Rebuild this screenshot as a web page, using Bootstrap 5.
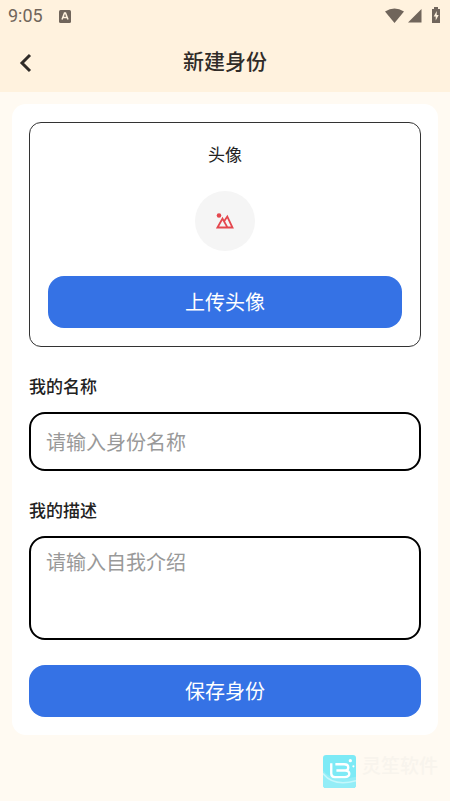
<!DOCTYPE html>
<html lang="zh-CN">
<head>
<meta charset="utf-8">
<meta name="viewport" content="width=device-width, initial-scale=1">
<title>新建身份</title>
<link href="https://cdn.jsdelivr.net/npm/bootstrap@5.3.0/dist/css/bootstrap.min.css" rel="stylesheet">
<style>
body{background:#fffaf2;font-family:Roboto,"Noto Sans CJK SC",sans-serif;color:#222}
.top-area{background:#fff2de}
.status-row{height:32px;padding:0 8px;color:#70655b;font-size:18px;line-height:32px}
.title-row{height:60px}
.title-row h1{font-size:21px;line-height:32px;font-weight:500;color:#302c28}
.back-btn{width:52px;height:60px;left:0;top:0;color:#302c28}
.panel{margin:12px;padding:18px 17px;border-radius:14px;background:#fff}
.avatar-box{border:1px solid #333;border-radius:12px;padding:20px 18px 18px}
.avatar-title{font-size:17px;line-height:24px}
.avatar-pic{width:60px;height:60px;background:#f5f5f5;margin:24px 0 25px}
.main-btn{background:#3572e5;color:#fff;border:0;border-radius:16px;height:52px;font-size:20px;line-height:30px;padding:2px 0 0}
.main-btn:hover{background:#2c66d4;color:#fff}
.field-label{font-size:17px;line-height:24px;font-weight:500;margin:28px 0 13px}
.field-box{border:2px solid #000;border-radius:16px;font-size:20px;line-height:30px;padding:13px 15px 11px;color:#222}
.field-box::placeholder{color:#999;opacity:1}
.name-box{height:59px}
.desc-box{height:104px;padding-top:10px;resize:none;margin-bottom:25px}
.brand{padding:8px 12px 12px;gap:6px}
.brand-name{font-size:19px;line-height:24px;font-weight:500;color:#f8f4ed}
</style>
<script src="https://cdn.jsdelivr.net/npm/bootstrap@5.3.0/dist/js/bootstrap.bundle.min.js"></script>
</head>
<body>
<header class="top-area">
  <div class="status-row d-flex align-items-center">
    <span>9:05</span>
    <svg class="ms-3" width="12" height="13" viewBox="0 0 12 13" aria-hidden="true"><rect width="12" height="13" rx="1.500" fill="#70655b"/><path d="M3 9.500 5.500 3h1L9 9.500M4 7.500h4" fill="none" stroke="#fff2de" stroke-width="1.500"/></svg>
    <svg class="ms-auto" width="58" height="18" viewBox="0 0 58 18" aria-hidden="true" fill="#70655b"><path d="M1 4.500Q10.500-1.500 20 4.500L10.500 16Z"/><path d="M37.500 2v13.500H24Z"/><path d="M48 2h2V0h4v2h2v14h-8Z"/><path d="m52.700 4-3 5.500h2v4l3-5.500h-2Z" fill="#fff2de"/></svg>
  </div>
  <div class="title-row position-relative d-flex align-items-center justify-content-center">
    <button type="button" class="back-btn btn p-0 border-0 position-absolute" aria-label="返回"><svg width="14" height="20" viewBox="0 0 14 20" fill="none" stroke="currentColor" stroke-width="3"><path d="m11 2-8 8 8 8"/></svg></button>
    <h1 class="m-0">新建身份</h1>
  </div>
</header>
<main class="panel">
  <form>
    <section class="avatar-box d-flex flex-column align-items-center">
      <div class="avatar-title">头像</div>
      <div class="avatar-pic rounded-circle d-flex align-items-center justify-content-center">
        <svg width="18" height="16" viewBox="0 0 18 16" aria-hidden="true"><circle cx="3" cy="2.500" r="2.300" fill="#e4474e"/><path d="M1.500 14.500 6.500 5.500 11.500 14.500ZM8.300 8l3-4.500 5.200 11h-5" fill="none" stroke="#e4474e" stroke-width="1.800"/></svg>
      </div>
      <button type="button" class="btn main-btn w-100">上传头像</button>
    </section>
    <label class="field-label d-block" for="name">我的名称</label>
    <input class="field-box name-box d-block w-100" id="name" type="text" placeholder="请输入身份名称">
    <label class="field-label d-block" for="desc">我的描述</label>
    <textarea class="field-box desc-box d-block w-100" id="desc" placeholder="请输入自我介绍"></textarea>
    <button type="submit" class="btn main-btn w-100">保存身份</button>
  </form>
</main>
<footer class="brand d-flex justify-content-end">
  <svg width="33" height="33" viewBox="0 0 32 32" aria-hidden="true"><rect width="32" height="32" rx="3" fill="#7deaf6"/><path d="M0 15Q9 27 32 21v8q0 3-3 3H3q-3 0-3-3Z" fill="#93edf7"/><path d="M0 18Q10 31 32 25" fill="none" stroke="#c5f7fb" stroke-width="1.500"/><path d="M8 8v10q0 3.500 3.500 3.500H21q4.500 0 4.500-3.200T21.500 15H13M12 9h8.500q4 0 4 3t-3 3" fill="none" stroke="#fff" stroke-width="2.300"/><circle cx="26.500" cy="5.500" r="1.600" fill="#fff"/><circle cx="29.500" cy="11" r="1" fill="#fff"/></svg>
  <span class="brand-name">灵笙软件</span>
</footer>
</body>
</html>
